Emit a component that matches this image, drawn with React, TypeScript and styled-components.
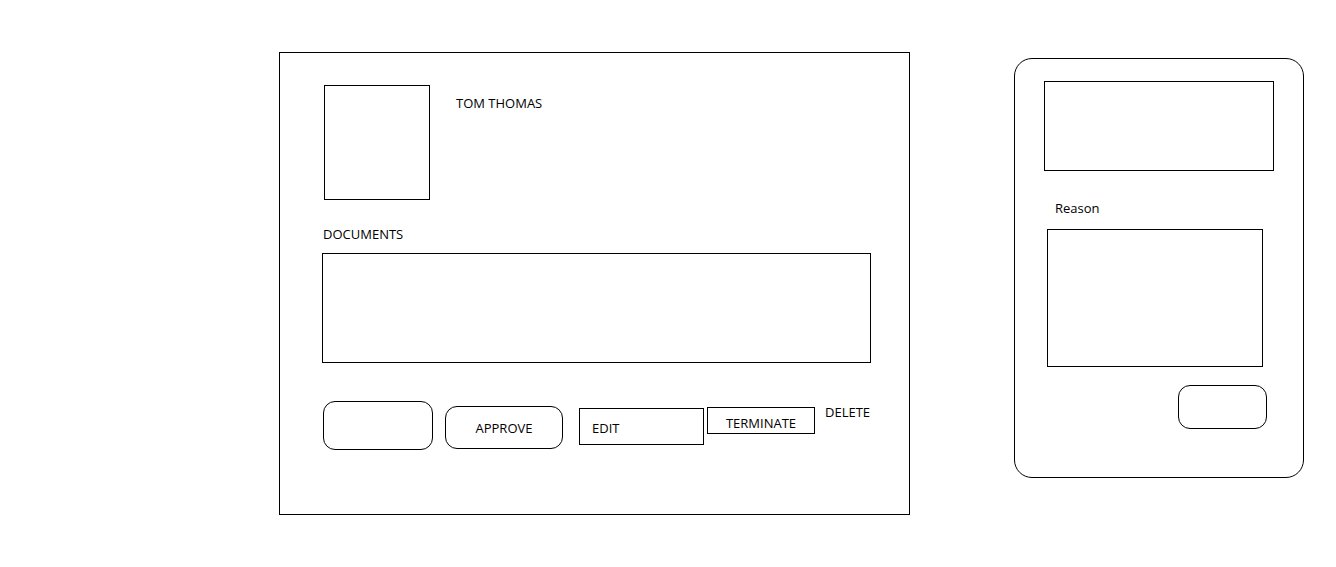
import styled, { createGlobalStyle } from "styled-components";

const GlobalStyle = createGlobalStyle`
  html, body {
    margin: 0;
    padding: 0;
    background: #fff;
  }
  body {
    font-family: "Open Sans", "Liberation Sans", sans-serif;
    font-size: 13px;
    line-height: 16px;
    color: #000;
  }
  * {
    box-sizing: border-box;
  }
`;

const Page = styled.div`
  display: flex;
  align-items: flex-start;
  gap: 104px;
  padding: 52px 0 0 279px;
  width: 1336px;
  height: 567px;
`;

const Panel = styled.div`
  display: flex;
  flex-direction: column;
  align-items: flex-start;
  width: 631px;
  height: 463px;
  border: 1px solid #000;
  padding: 32px 0 0 42px;
`;

const Header = styled.div`
  display: flex;
  align-items: flex-start;
  gap: 26px;
  margin-left: 2px;
`;

const Photo = styled.div`
  width: 106px;
  height: 115px;
  border: 1px solid #000;
`;

const Name = styled.div`
  margin-top: 10px;
  text-transform: uppercase;
`;

const Label = styled.div<{ $top: number; $left: number }>`
  margin-top: ${(p) => p.$top}px;
  margin-left: ${(p) => p.$left}px;
`;

const Box = styled.div<{ $w: number; $h: number; $top: number; $left?: number }>`
  width: ${(p) => p.$w}px;
  height: ${(p) => p.$h}px;
  margin-top: ${(p) => p.$top}px;
  margin-left: ${(p) => p.$left ?? 0}px;
  border: 1px solid #000;
`;

const Actions = styled.div`
  display: flex;
  align-items: flex-start;
  margin-top: 38px;
  margin-left: 1px;
`;

const PillButton = styled.div<{ $w: number; $h: number; $top?: number; $gap?: number }>`
  display: flex;
  align-items: center;
  justify-content: center;
  width: ${(p) => p.$w}px;
  height: ${(p) => p.$h}px;
  margin-top: ${(p) => p.$top ?? 0}px;
  margin-right: ${(p) => p.$gap ?? 0}px;
  border: 1px solid #000;
  border-radius: 12px;
`;

const SquareButton = styled.div<{ $w: number; $h: number; $top: number; $gap: number; $center?: boolean }>`
  display: flex;
  align-items: flex-start;
  justify-content: ${(p) => (p.$center ? "center" : "flex-start")};
  width: ${(p) => p.$w}px;
  height: ${(p) => p.$h}px;
  margin-top: ${(p) => p.$top}px;
  margin-right: ${(p) => p.$gap}px;
  padding: ${(p) => (p.$center ? "7px 0 0 0" : "11px 0 0 12px")};
  border: 1px solid #000;
`;

const LinkText = styled.div`
  margin-top: 3px;
`;

const Sidebar = styled.div`
  display: flex;
  flex-direction: column;
  align-items: flex-start;
  width: 290px;
  height: 420px;
  margin-top: 6px;
  border: 1px solid #000;
  border-radius: 18px;
  padding: 22px 0 0 29px;
`;

const SubmitRow = styled.div`
  align-self: stretch;
  display: flex;
  margin-top: 18px;
  padding-left: 134px;
`;

export default function App() {
  return (
    <>
      <GlobalStyle />
      <Page>
        <Panel>
          <Header>
            <Photo />
            <Name>Tom Thomas</Name>
          </Header>
          <Label $top={26} $left={1}>DOCUMENTS</Label>
          <Box $w={549} $h={110} $top={11} />
          <Actions>
            <PillButton $w={110} $h={49} $gap={12} />
            <PillButton $w={118} $h={43} $top={5} $gap={16}>APPROVE</PillButton>
            <SquareButton $w={125} $h={37} $top={7} $gap={3}>EDIT</SquareButton>
            <SquareButton $w={108} $h={27} $top={6} $gap={10} $center>TERMINATE</SquareButton>
            <LinkText>DELETE</LinkText>
          </Actions>
        </Panel>
        <Sidebar>
          <Box $w={230} $h={90} $top={0} />
          <Label $top={29} $left={11}>Reason</Label>
          <Box $w={216} $h={138} $top={13} $left={3} />
          <SubmitRow>
            <PillButton $w={89} $h={44} />
          </SubmitRow>
        </Sidebar>
      </Page>
    </>
  );
}
